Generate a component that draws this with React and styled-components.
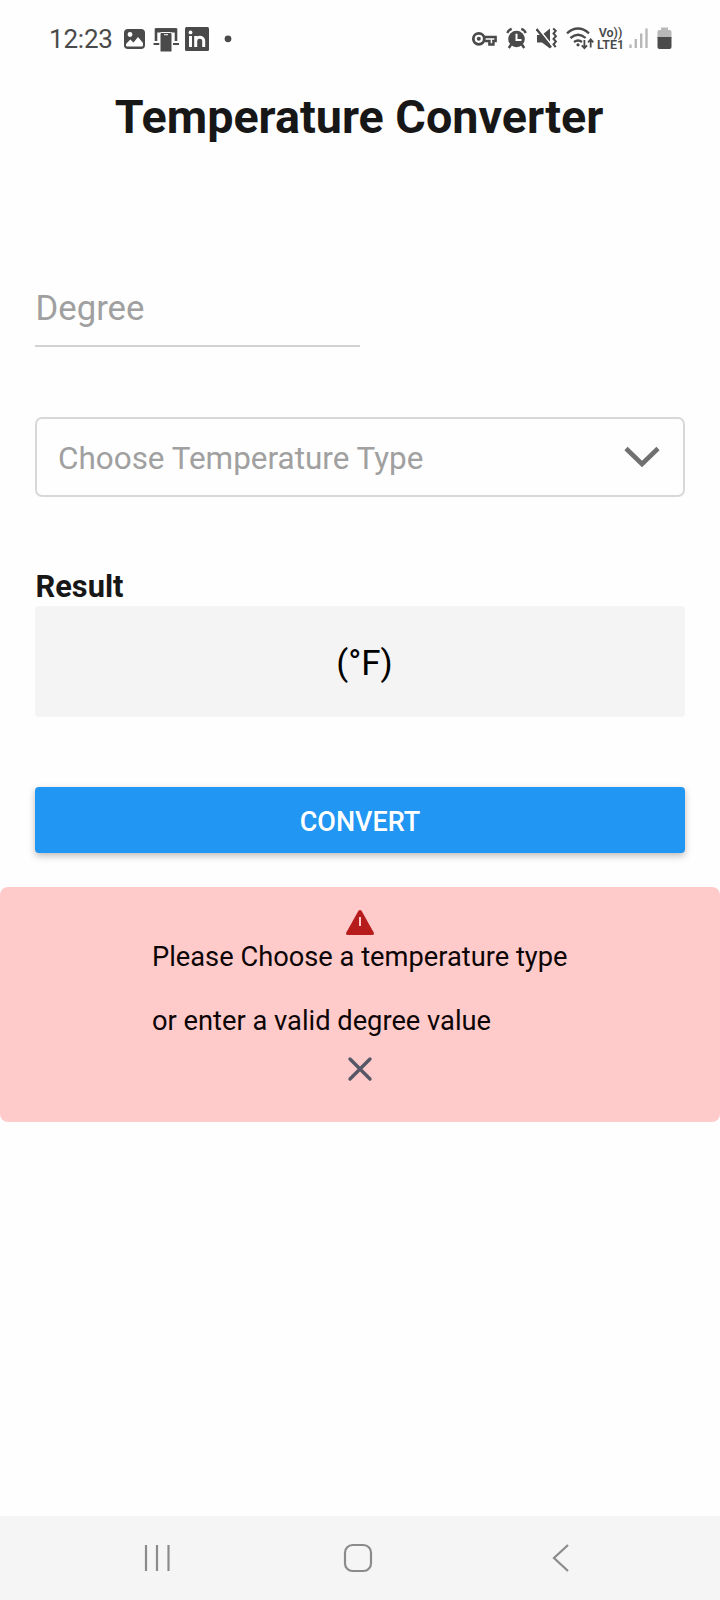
import React from "react";
import styled, { createGlobalStyle } from "styled-components";

const GlobalStyle = createGlobalStyle`
  * { box-sizing: border-box; }
  body { margin: 0; background: #fefefe; font-family: Roboto, sans-serif; }
`;

const Screen = styled.div`
  display: flex;
  flex-direction: column;
  width: 720px;
  height: 1600px;
  overflow: hidden;
`;

const StatusBar = styled.header`
  display: flex;
  justify-content: space-between;
  height: 78px;
  padding: 24px 47px 0 49px;
  color: #4a4a4a;
`;

const StatusGroup = styled.div`
  display: flex;
  align-items: center;
  height: 30px;
`;

const Clock = styled.span`
  width: 74px;
  font-size: 26px;
  line-height: 30px;
  letter-spacing: -0.2px;
  white-space: nowrap;
`;

const StatusIcon = styled.svg`
  display: block;
  flex: none;
  width: ${(p) => p.$w}px;
  height: 30px;
  margin-right: ${(p) => p.$gap || 0}px;
`;

const Network = styled.div`
  width: 27px;
  margin-right: 5px;
  font-size: 12.5px;
  font-weight: 600;
  line-height: 12px;
  text-align: center;
  white-space: nowrap;
`;

const Title = styled.h1`
  height: 78px;
  margin: 0;
  padding-right: 2px;
  color: #171717;
  font-size: 46.7px;
  font-weight: 700;
  line-height: 78px;
  text-align: center;
`;

const Form = styled.main`
  display: flex;
  flex-direction: column;
  padding: 112px 35px 0;
`;

const DegreeField = styled.div`
  width: 325px;
  height: 79px;
  padding-left: 0.5px;
  border-bottom: 2px solid #d2d2d2;
  color: #a0a0a0;
  font-size: 34.7px;
  line-height: 80px;
`;

const Select = styled.div`
  display: flex;
  justify-content: space-between;
  align-items: center;
  height: 80px;
  margin-top: 70px;
  padding: 3px 23px 0 21px;
  border: 2px solid #d8d8d8;
  border-radius: 7px;
  color: #a0a0a0;
  font-size: 31.45px;
`;

const Chevron = styled.svg`
  width: 36px;
  height: 24px;
  margin-top: -4px;
`;

const ResultLabel = styled.div`
  height: 39px;
  margin-top: 70px;
  padding-left: 0.5px;
  color: #171717;
  font-size: 30.8px;
  font-weight: 700;
  line-height: 40px;
`;

const ResultBox = styled.div`
  height: 111px;
  padding-left: 9px;
  border-radius: 4px;
  background: #f4f4f4;
  color: #000;
  font-size: 35px;
  line-height: 116px;
  text-align: center;
`;

const ConvertButton = styled.button`
  height: 66px;
  margin-top: 70px;
  padding: 4px 0 0;
  border: 0;
  border-radius: 4px;
  background: #2196f3;
  box-shadow: 0 3px 7px rgba(0, 0, 0, 0.26);
  color: #fff;
  font: 500 27px Roboto, sans-serif;
`;

const Alert = styled.section`
  display: flex;
  flex-direction: column;
  align-items: center;
  height: 235px;
  margin-top: 34px;
  padding-top: 22px;
  border-radius: 8px;
  background: #ffcaca;
  color: #0c0505;
`;

const AlertIcon = styled.svg`
  width: 30px;
  height: 28px;
`;

const AlertText = styled.p`
  width: 416px;
  margin: -12px 0 0;
  font-size: 27.28px;
  line-height: 64px;
  white-space: nowrap;
`;

const CloseIcon = styled.svg`
  width: 26px;
  height: 26px;
  margin-top: 3px;
`;

const NavBar = styled.nav`
  display: flex;
  align-items: center;
  justify-content: space-between;
  height: 84px;
  margin-top: auto;
  padding: 0 146px 0 142px;
  background: #f5f5f5;
`;

const NavIcon = styled.svg`
  width: 30px;
  height: 32px;
  fill: none;
  stroke: #8b8b8b;
  stroke-width: 2.2;
`;

const INK = "#4a4a4a";

function Status() {
  return (
    <StatusBar>
      <StatusGroup>
        <Clock>12:23</Clock>
        <StatusIcon $w={22} $gap={7} viewBox="0 0 22 30">
          <rect x="1" y="5" width="21" height="20" rx="4" fill={INK} />
          <circle cx="7" cy="10.5" r="2.4" fill="#fff" />
          <path d="M3 20l4.300-4.500 3.200 3 4.500-5.500 5 6v2.200q0 1.300-1.300 1.300H4.300q-1.300 0-1.300-1.300z" fill="#fff" />
        </StatusIcon>
        <StatusIcon $w={28} $gap={5} viewBox="0 0 28 30">
          <path d="M4 17V5.500h20V17" fill="none" stroke={INK} strokeWidth="2.600" />
          <path d="M1.500 20h6M21 20h6" stroke={INK} strokeWidth="2" />
          <rect x="4" y="4.200" width="20" height="4.300" fill={INK} />
          <rect x="8" y="8.500" width="12" height="19.500" rx="1.500" fill={INK} stroke="#fefefe" />
          <path d="M12 10.700h4" stroke="#fff" />
        </StatusIcon>
        <StatusIcon $w={24} $gap={15} viewBox="0 0 24 30">
          <rect x="0" y="3" width="24" height="24" rx="1.500" fill={INK} />
          <circle cx="5.500" cy="8.400" r="1.900" fill="#fff" />
          <path d="M5.500 12v11M10.700 12v11M10.700 23v-6c0-4.500 8-5.200 8 0v6" fill="none" stroke="#fff" strokeWidth="3" />
        </StatusIcon>
        <StatusIcon $w={8} viewBox="0 0 8 30">
          <circle cx="4" cy="14.800" r="3.400" fill={INK} />
        </StatusIcon>
      </StatusGroup>
      <StatusGroup>
        <StatusIcon $w={26} $gap={9} viewBox="0 0 26 30">
          <circle cx="7.800" cy="14.800" r="5.500" fill="none" stroke={INK} strokeWidth="2.800" />
          <circle cx="7.800" cy="14.800" r="2" fill={INK} />
          <path d="M12.800 13h11.800v4h-2.200v3.500h-4V17h-5" fill="none" stroke={INK} strokeWidth="2.500" />
        </StatusIcon>
        <StatusIcon $w={22} $gap={8} viewBox="0 0 22 30">
          <circle cx="10.500" cy="15" r="8.300" fill={INK} />
          <path d="M1.300 9q1-3 4.400-4.200M19.700 9q-1-3-4.400-4.200M5.100 20.500L2.800 24M15.900 20.500l2.300 3.500" fill="none" stroke={INK} strokeWidth="2.400" />
          <path d="M10.500 9.800V16h5" fill="none" stroke="#fff" strokeWidth="2" />
        </StatusIcon>
        <StatusIcon $w={22} $gap={8} viewBox="0 0 22 30">
          <path d="M1 11h5l8-6.500v20L6 18.500H1z" fill={INK} />
          <path d="M2 4l14 17.500" stroke="#fefefe" strokeWidth="1.600" />
          <path d="M0.500 5l14.500 18.500" stroke={INK} strokeWidth="2.400" />
          <path d="M17.200 4.500l2.500 2.400-2.200 2.600 2.400 2.700-2.400 2.700 2.400 2.700-2.400 2.600 2.200 3" fill="none" stroke={INK} strokeWidth="2" />
        </StatusIcon>
        <StatusIcon $w={28} $gap={3} viewBox="0 0 28 30">
          <g fill="none" stroke={INK} strokeWidth="2.300">
            <path d="M1 9.300q11-9.500 22 0M4.400 14q7.800-6.600 15.200 0M8 18q4.100-3 8 0" />
          </g>
          <circle cx="12" cy="20.800" r="1.600" fill={INK} />
          <path d="M18.400 16v8M15.800 21.300l2.600 2.900 2.600-2.900M24.700 23.500v-8M22.100 18.300l2.600-2.900 2.600 2.900" fill="none" stroke={INK} strokeWidth="1.800" />
        </StatusIcon>
        <Network>
          <div>Vo))</div>
          <div>LTE1</div>
        </Network>
        <StatusIcon $w={20} $gap={8} viewBox="0 0 20 30">
          <path d="M1.500 20.500V24M6.800 15V24M12.200 9.500V24M17.500 4.500V24" stroke="#b8b8b8" strokeWidth="2.400" />
        </StatusIcon>
        <StatusIcon $w={16} viewBox="0 0 16 30">
          <path d="M4 3.500h7V6h1.800q1.700 0 1.700 1.700V14H0.500V7.700q0-1.700 1.700-1.700h1.800z" fill="#b8b8b8" />
          <path d="M0.500 13h14v10q0 2-2 2H2.500q-2 0-2-2z" fill={INK} />
        </StatusIcon>
      </StatusGroup>
    </StatusBar>
  );
}

export default function App() {
  return (
    <Screen>
      <GlobalStyle />
      <Status />
      <Title>Temperature Converter</Title>
      <Form>
        <DegreeField>Degree</DegreeField>
        <Select>
          <span>Choose Temperature Type</span>
          <Chevron viewBox="0 0 36 24">
            <path d="M2 3.500l16 15.500 16-15.500" fill="none" stroke="#707070" strokeWidth="4.600" />
          </Chevron>
        </Select>
        <ResultLabel>Result</ResultLabel>
        <ResultBox>(°F)</ResultBox>
        <ConvertButton>CONVERT</ConvertButton>
      </Form>
      <Alert>
        <AlertIcon viewBox="0 0 30 28">
          <path d="M13.300 2q1.700-2 3.400 0l12 21.500q.8 2.500-1.500 2.500H2.800q-2.300 0-1.500-2.500z" fill="#b71c1c" />
          <path d="M15 8v9" stroke="#ffcaca" strokeWidth="2" />
        </AlertIcon>
        <AlertText>
          Please Choose a temperature type
          <br />
          or enter a valid degree value
        </AlertText>
        <CloseIcon viewBox="0 0 26 26">
          <path d="M3 3l20 20M23 3L3 23" stroke="#555766" strokeWidth="3.400" strokeLinecap="round" />
        </CloseIcon>
      </Alert>
      <NavBar>
        <NavIcon viewBox="0 0 30 32">
          <path d="M4 3v26M15 3v26M26.500 3v26" />
        </NavIcon>
        <NavIcon viewBox="0 0 30 32">
          <rect x="2" y="3" width="26" height="26" rx="7.500" />
        </NavIcon>
        <NavIcon viewBox="0 0 30 32">
          <path d="M24 3L10 16 24 29" />
        </NavIcon>
      </NavBar>
    </Screen>
  );
}
